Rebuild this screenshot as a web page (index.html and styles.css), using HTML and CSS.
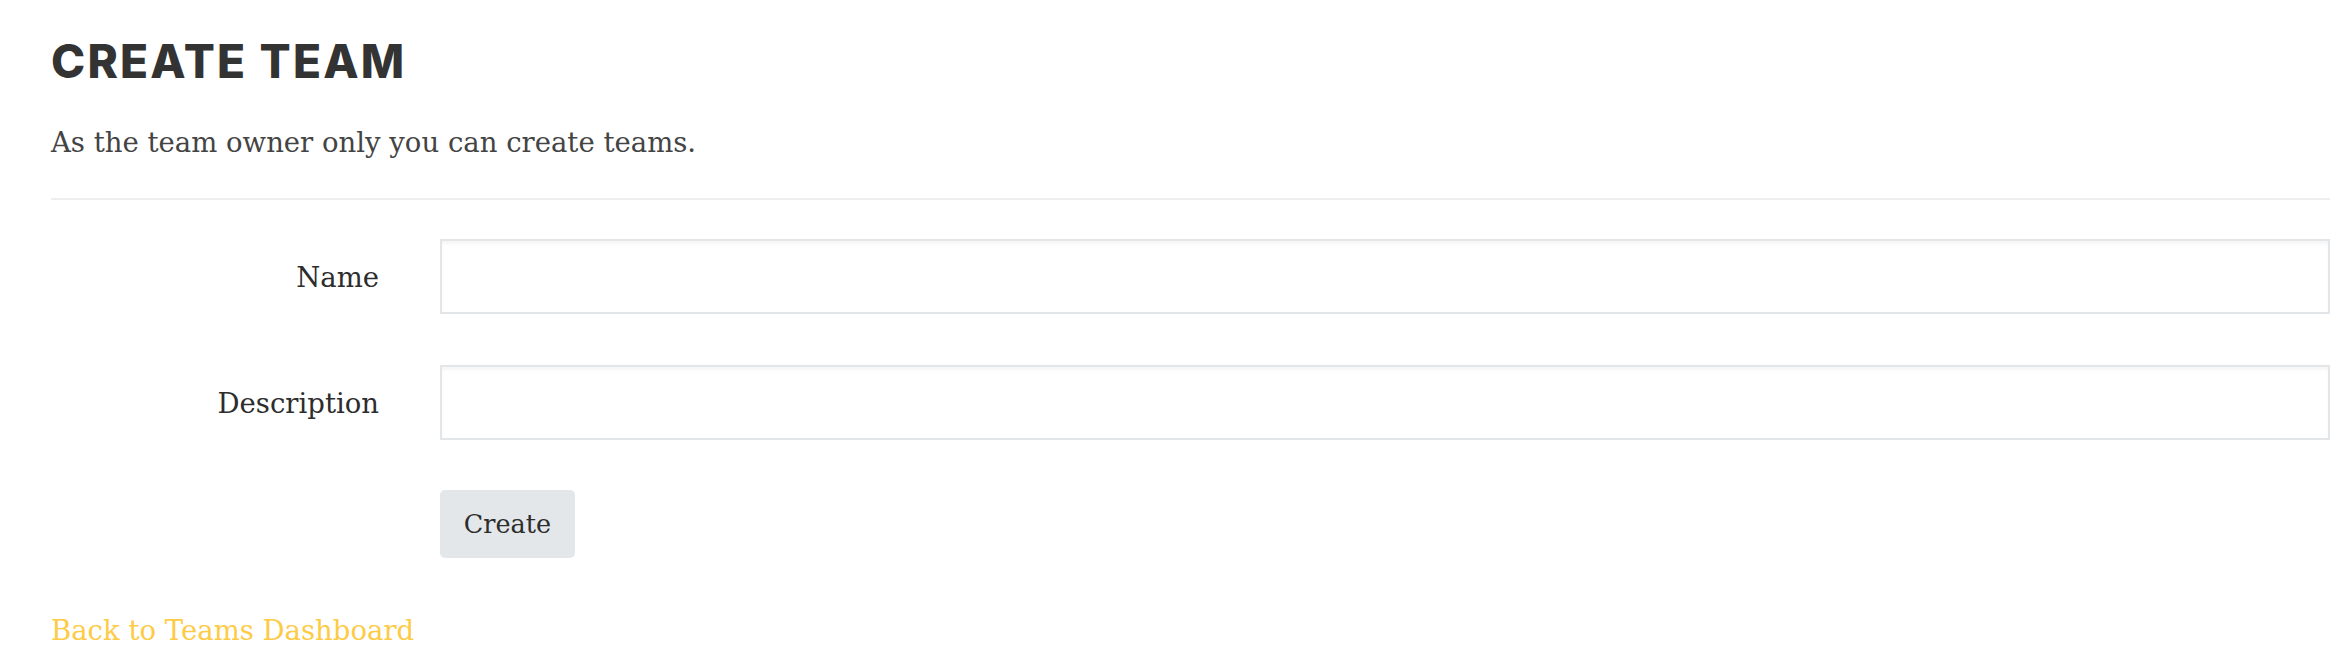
FILE: index.html
```html
<!DOCTYPE html>
<html lang="en">
<head>
  <meta charset="UTF-8">
  <meta name="viewport" content="width=device-width, initial-scale=1.0">
  <title>Create Team</title>
  <link rel="stylesheet" href="styles.css">
</head>
<body>

  <div class="page">
    <h1 class="page-title">CREATE TEAM</h1>
    <p class="page-lead">As the team owner only you can create teams.</p>

    <hr class="divider">

    <form class="team-form">
      <label class="form-label" for="teamName">Name</label>
      <input class="form-input" type="text" id="teamName" name="name">

      <label class="form-label" for="teamDescription">Description</label>
      <input class="form-input" type="text" id="teamDescription" name="description">

      <div class="form-actions">
        <button type="submit" class="btn-create">Create</button>
      </div>
    </form>

    <a class="back-link" href="#">Back to Teams Dashboard</a>
  </div>

</body>
</html>
```

FILE: styles.css
```css
body {
  font-family: 'DejaVu Serif', 'Liberation Serif', serif;
  background-color: #ffffff;
  color: #333;
  margin: 0;
  padding: 0;
}

.page {
  margin: 0 17px 0 51px;
  padding-top: 33px;
}

/* title + lead text */
.page-title {
  font-family: 'Inter', 'Open Sans', sans-serif;
  font-weight: 800;
  font-size: 46px;
  line-height: 56px;
  letter-spacing: 2.2px;
  color: #333;
  margin: 0;
}

.page-lead {
  font-size: 27.5px;
  font-weight: 300;
  line-height: 40px;
  color: #444;
  margin: 33px 0 0;
}

.divider {
  border: none;
  border-top: 2px solid #eeeeee;
  margin: 36px 0 0;
}

/* form */
.team-form {
  display: grid;
  grid-template-columns: 328px 1fr;
  column-gap: 61px;
  row-gap: 51px;
  align-items: center;
  margin-top: 39px;
}

.form-label {
  text-align: right;
  font-size: 27.5px;
  color: #2d2d2d;
}

.form-input {
  height: 75px;
  box-sizing: border-box;
  border: 2px solid #e3e6e9;
  box-shadow: inset 0 3px 3px rgba(0, 0, 0, 0.04);
  background: #fff;
  font-family: inherit;
  font-size: 24px;
  padding: 0 16px;
  margin: 0;
  outline: none;
}

.form-actions {
  grid-column: 2;
  margin-top: -1px;
}

.btn-create {
  background-color: #e4e7ea;
  color: #2d2d2d;
  font-family: inherit;
  font-size: 25.5px;
  width: 135px;
  height: 68px;
  border: none;
  border-radius: 5px;
  cursor: pointer;
}

.btn-create:hover {
  background-color: #d9dde1;
}

.back-link {
  display: inline-block;
  margin-top: 56px;
  font-size: 27.5px;
  color: #fdcb46;
  text-decoration: none;
}
```
